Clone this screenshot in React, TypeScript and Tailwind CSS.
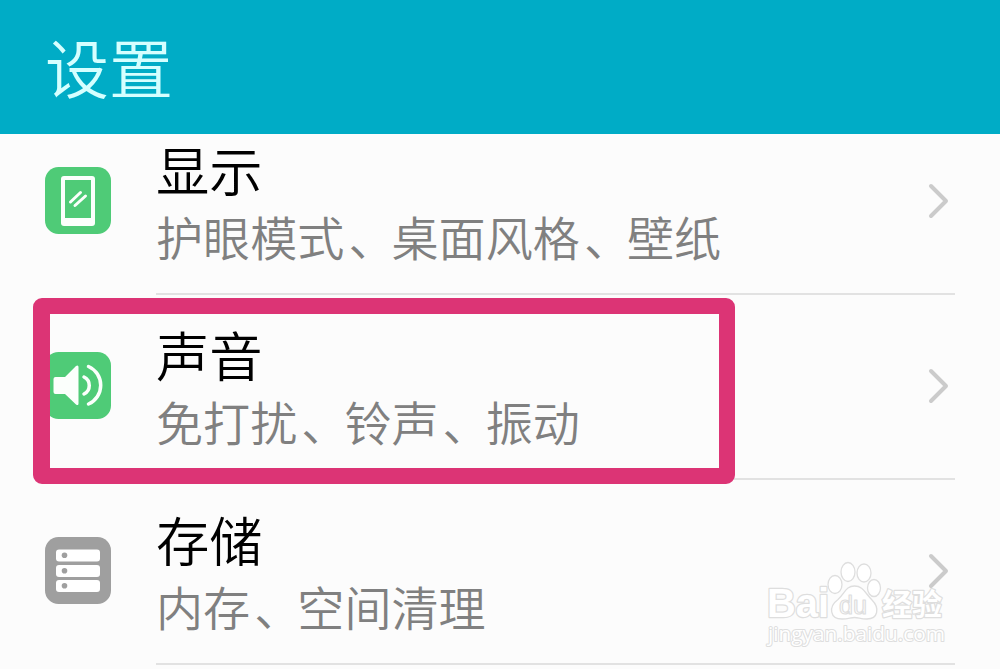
import React from 'react';

const DisplayIcon: React.FC = () => (
  <svg viewBox="0 0 66 67" className="w-[66px] h-[67px]">
    <rect width="66" height="67" rx="13.5" fill="#4fcb77" />
    <rect x="16" y="9" width="34" height="50" rx="3" fill="#fbfffc" />
    <rect x="20" y="13" width="26" height="38" fill="#4fcb77" />
    <path d="M25.5 35 35.5 25.5M30 38.5 40.5 29" stroke="#fbfffc" strokeWidth="3" strokeLinecap="round" />
  </svg>
);

const SoundIcon: React.FC = () => (
  <svg viewBox="0 0 66 67" className="w-[66px] h-[67px]" fill="none">
    <rect width="66" height="67" rx="13.5" fill="#4fcb77" />
    <path
      d="M10.5 25H20L31 14Q33.5 12.5 33.5 15V51.5Q33.5 54 31 52.5L20 42H10.5Q8.5 42 8.5 40V27Q8.5 25 10.5 25Z"
      fill="#fbfffc"
    />
    <path d="M39 25A9.5 9.5 0 0 1 39 42M43.5 14.5A20.5 20.5 0 0 1 43.5 52" stroke="#fbfffc" strokeWidth="3.5" strokeLinecap="round" />
  </svg>
);

const StorageIcon: React.FC = () => (
  <svg viewBox="0 0 66 67" className="w-[66px] h-[67px]">
    <rect width="66" height="67" rx="13.5" fill="#9f9f9f" />
    {[12.5, 28, 43].map((y) => (
      <g key={y}>
        <rect x="11" y={y} width="44" height="12" rx="3" fill="#ffffff" />
        <circle cx="19.5" cy={y + 5.7} r="2.8" fill="#9f9f9f" />
      </g>
    ))}
  </svg>
);

const items = [
  { title: '显示', details: ['护眼模式', '桌面风格', '壁纸'], icon: <DisplayIcon /> },
  { title: '声音', details: ['免打扰', '铃声', '振动'], icon: <SoundIcon /> },
  { title: '存储', details: ['内存', '空间清理'], icon: <StorageIcon /> },
];

const Watermark: React.FC = () => (
  <svg
    viewBox="0 0 200 100"
    className="absolute left-[760px] top-[555px] w-[200px] h-[100px]"
    fill="#ffffff"
    stroke="#dedede"
    strokeWidth="1.3"
  >
    <g>
      <ellipse cx="75" cy="29.5" rx="7" ry="9" />
      <ellipse cx="88" cy="17" rx="7" ry="9.5" />
      <ellipse cx="104" cy="18" rx="7" ry="9" />
      <ellipse cx="114" cy="33" rx="6.5" ry="8.5" />
      <path d="M94.5 31C86 31 85 38 78 44.5C68 52 70 64 82 64C89 64 90 62.5 94.5 62.5C99 62.5 100 64 107 64C118 64 120 53 112 45C105 38 103 31 94.5 31Z" />
    </g>
    <g fontFamily="'Liberation Sans', sans-serif" strokeLinejoin="round">
      <text x="7" y="62" fontSize="40" fontWeight="700" textLength="62" lengthAdjust="spacingAndGlyphs" paintOrder="stroke" strokeWidth="2.5">
        Bai
      </text>
      <text x="79" y="58.5" fontSize="25" textLength="28" lengthAdjust="spacingAndGlyphs" strokeWidth="1.2">
        du
      </text>
      <text x="122" y="60" fontSize="30" fontWeight="700" fontFamily="'Noto Sans CJK SC', sans-serif" paintOrder="stroke" strokeWidth="2.5">
        经验
      </text>
      <text x="8" y="86" fontSize="20" fontFamily="'Open Sans', sans-serif" textLength="177" lengthAdjust="spacingAndGlyphs" paintOrder="stroke" strokeWidth="2">
        jingyan.baidu.com
      </text>
    </g>
  </svg>
);

const App: React.FC = () => {
  return (
    <div className="relative w-[1000px] h-[669px] overflow-hidden bg-[#fcfcfc] font-['Noto_Sans_CJK_SC',sans-serif]">
      <header className="h-[134px] bg-[#00acc6] pl-[45px] pt-[25px]">
        <h1 className="text-[64px] leading-[80px] font-[350] text-[#d5ffff]">设置</h1>
      </header>

      <main className="h-[535px]">
        <ul className="-mt-6">
          {items.map((item) => (
            <li key={item.title} className="flex h-[185px] pl-[45px] pr-[45px]">
              <div className="shrink-0 pt-[57px] mr-[45px]">{item.icon}</div>
              <div className="flex flex-1 border-b-2 border-[#e2e2e2]">
                <div className="flex-1 pt-[25px]">
                  <h2 className="text-[53.3px] leading-[67px] font-[350] text-black">{item.title}</h2>
                  <p className="text-[47.1px] leading-[67px] font-[350] text-[#808080]">
                    {item.details.map((detail, i) => (
                      <React.Fragment key={detail}>
                        {i > 0 && <span className="pl-1 -mr-1">、</span>}
                        {detail}
                      </React.Fragment>
                    ))}
                  </p>
                </div>
                <svg viewBox="0 0 22 36" className="w-[22px] h-[36px] mt-[73px] mr-[5px]" fill="none">
                  <path d="M3 3 18 18 3 33" stroke="#cbcbcb" strokeWidth="4" strokeLinecap="round" strokeLinejoin="round" />
                </svg>
              </div>
            </li>
          ))}
        </ul>
      </main>

      <div className="absolute left-[33px] top-[298px] w-[702px] h-[186px] rounded-[9px] border-[16px] border-l-[17px] border-[#dc3475]" />
      <Watermark />
    </div>
  );
};

export default App;
